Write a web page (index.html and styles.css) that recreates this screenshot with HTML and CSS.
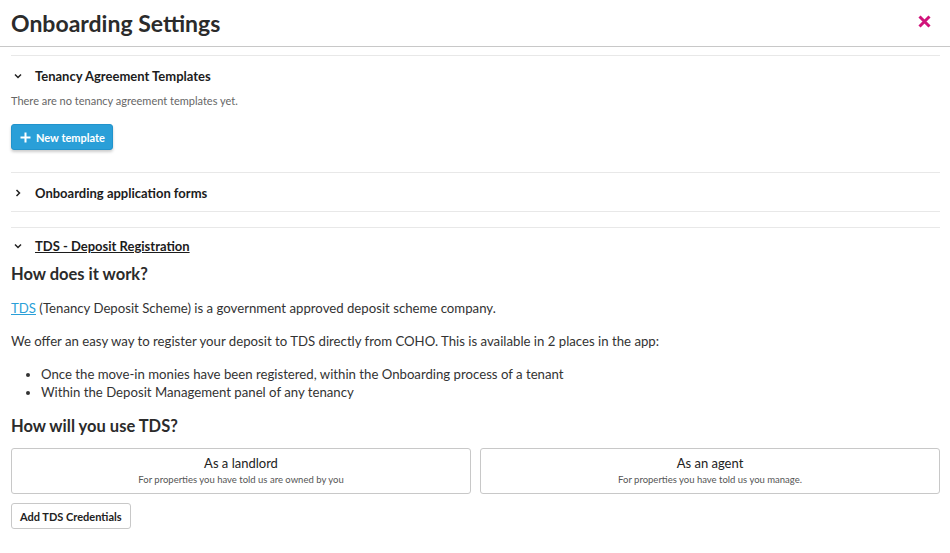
FILE: index.html
```html
<!DOCTYPE html>
<html lang="en">
<head>
    <meta charset="UTF-8">
    <title>Onboarding Settings</title>
    <link rel="stylesheet" href="styles.css">
</head>
<body>
    <div class="header">
        <h1>Onboarding Settings</h1>
        <button class="close" type="button" aria-label="Close">
            <svg width="13" height="13" viewBox="0 0 13 13"><path d="M1.5 1.5L11.5 11.5M11.5 1.5L1.5 11.5" stroke="#d0137a" stroke-width="3"/></svg>
        </button>
    </div>

    <div class="content">
        <div class="section first">
            <div class="section-title">
                <span class="chev"><svg width="8" height="8" viewBox="0 0 8 8"><path d="M1 2.5L4 5.5L7 2.5" fill="none" stroke="#222" stroke-width="1.5"/></svg></span>
                Tenancy Agreement Templates
            </div>
            <p class="empty">There are no tenancy agreement templates yet.</p>
            <button class="btn-primary" type="button">
                <svg width="11" height="11" viewBox="0 0 11 11"><path d="M5.5 0.5V10.5M0.5 5.5H10.5" stroke="#fff" stroke-width="2"/></svg>
                New template
            </button>
        </div>

        <div class="section collapsed">
            <div class="section-title">
                <span class="chev"><svg width="8" height="8" viewBox="0 0 8 8"><path d="M2.5 1L5.5 4L2.5 7" fill="none" stroke="#222" stroke-width="1.5"/></svg></span>
                Onboarding application forms
            </div>
        </div>

        <div class="section tds">
            <div class="section-title">
                <span class="chev"><svg width="8" height="8" viewBox="0 0 8 8"><path d="M1 2.5L4 5.5L7 2.5" fill="none" stroke="#222" stroke-width="1.5"/></svg></span>
                <u>TDS - Deposit Registration</u>
            </div>
            <h2>How does it work?</h2>
            <p><a href="#">TDS</a> (Tenancy Deposit Scheme) is a government approved deposit scheme company.</p>
            <p>We offer an easy way to register your deposit to TDS directly from COHO. This is available in 2 places in the app:</p>
            <ul>
                <li>Once the move-in monies have been registered, within the Onboarding process of a tenant</li>
                <li>Within the Deposit Management panel of any tenancy</li>
            </ul>
            <h2 class="use">How will you use TDS?</h2>
            <div class="options">
                <div class="option">
                    <div class="option-title">As a landlord</div>
                    <div class="option-sub">For properties you have told us are owned by you</div>
                </div>
                <div class="option">
                    <div class="option-title">As an agent</div>
                    <div class="option-sub">For properties you have told us you manage.</div>
                </div>
            </div>
            <button class="btn-default" type="button">Add TDS Credentials</button>
        </div>
    </div>
</body>
</html>
```

FILE: styles.css
```css
body {
    margin: 0;
    font-family: Lato, "Noto Sans", sans-serif;
    color: #222;
    background: #fff;
}
.header {
    display: flex;
    justify-content: space-between;
    align-items: center;
    height: 46px;
    padding: 0 11px;
    border-bottom: 1px solid #c8c8c8;
}
.header h1 {
    margin: 0;
    font-size: 23px;
    font-weight: 700;
    color: #2b2b2b;
}
.close {
    background: none;
    border: none;
    padding: 0;
    margin: 0 8px 4px 0;
    cursor: pointer;
    display: flex;
}
.content {
    padding: 8px 10px 0 11px;
}
.section {
    border-top: 1px solid #e8e8e8;
}
.section.first {
    padding: 12px 0 22px;
}
.section.collapsed {
    border-bottom: 1px solid #e8e8e8;
    padding: 12px 0 10px;
}
.section.tds {
    margin-top: 15px;
    padding-top: 10px;
}
.section-title {
    display: flex;
    align-items: center;
    font-size: 13px;
    font-weight: 700;
    color: #1c1c1c;
    height: 16px;
}
.chev {
    display: inline-flex;
    width: 24px;
    padding-left: 3px;
    box-sizing: border-box;
}
.empty {
    margin: 10px 0 0;
    font-size: 11px;
    line-height: 14px;
    color: #666;
}
.btn-primary {
    display: inline-flex;
    align-items: center;
    gap: 5px;
    margin-top: 16px;
    height: 26px;
    padding: 0 7px 0 8px;
    background: #2a9fd8;
    color: #fff;
    border: 1px solid #2193cc;
    border-radius: 3px;
    box-shadow: 0 2px 3px rgba(0,0,0,0.2);
    font-family: inherit;
    font-size: 11px;
    font-weight: 700;
}
h2 {
    margin: 10px 0 0;
    font-size: 16.5px;
    line-height: 20px;
    font-weight: 700;
    color: #2b2b2b;
}
h2.use {
    margin-top: 15px;
}
p {
    margin: 15px 0 0;
    font-size: 13.2px;
    line-height: 18px;
    color: #333;
}
a {
    color: #2a9fd8;
}
ul {
    margin: 15px 0 0;
    padding-left: 30px;
    font-size: 13.2px;
    line-height: 18px;
    color: #333;
}
.options {
    display: grid;
    grid-template-columns: 1fr 1fr;
    gap: 9px;
    margin-top: 12px;
}
.option {
    border: 1px solid #c8c8c8;
    border-radius: 3px;
    text-align: center;
    height: 46px;
    box-sizing: border-box;
    padding-top: 5px;
}
.option-title {
    font-size: 13px;
    color: #222;
    line-height: 18px;
}
.option-sub {
    font-size: 9.5px;
    color: #555;
    margin-top: 2px;
}
.btn-default {
    margin-top: 9px;
    height: 26px;
    padding: 0 8px;
    background: #fff;
    border: 1px solid #c8c8c8;
    border-radius: 3px;
    font-family: inherit;
    font-size: 11px;
    font-weight: 700;
    color: #222;
}
```
